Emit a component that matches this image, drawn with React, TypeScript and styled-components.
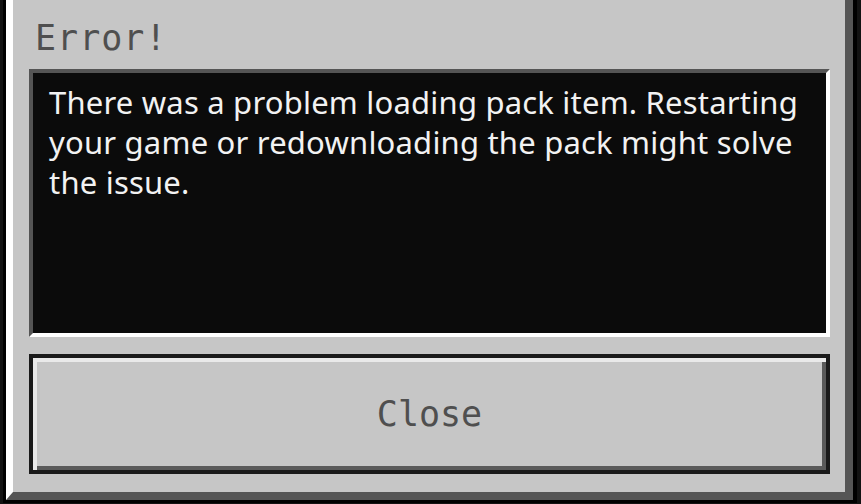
import React from "react";
import styled, { createGlobalStyle } from "styled-components";

const Global = createGlobalStyle`
  html, body { margin: 0; padding: 0; background: #121212; }
  * { box-sizing: border-box; }
`;

const Page = styled.div`
  width: 861px;
  height: 504px;
  overflow: hidden;
  background: #121212;
  padding-left: 3px;
  display: flex;
  align-items: flex-start;
`;

const Panel = styled.div`
  width: 854px;
  height: 503px;
  border-left: 3px solid #000;
  border-right: 4px solid #000;
  border-bottom: 3px solid #000;
`;

const PanelInner = styled.div`
  height: 100%;
  background: #c6c6c6;
  border-left: 7px solid #ffffff;
  border-right: 8px solid #555555;
  border-bottom: 8px solid #555555;
  padding: 0 15px 18px 16px;
  display: flex;
  flex-direction: column;
`;

const Title = styled.div`
  height: 69px;
  padding: 21px 0 0 6px;
  font-family: "DejaVu Sans Mono", "Liberation Mono", monospace;
  font-size: 35px;
  line-height: 35px;
  letter-spacing: 1px;
  color: #4f4f4f;
`;

const MessageBox = styled.div`
  height: 268px;
  background: #0b0b0b;
  border-top: 4px solid #555555;
  border-left: 4px solid #555555;
  border-right: 4px solid #ffffff;
  border-bottom: 4px solid #ffffff;
  padding: 9px 16px;
  font-family: "Noto Sans", "Open Sans", sans-serif;
  font-size: 31px;
  line-height: 40px;
  letter-spacing: 0.2px;
  color: #f2f2f2;
`;

const CloseButton = styled.button`
  margin-top: 17px;
  height: 120px;
  width: 100%;
  background: #c6c6c6;
  border: 4px solid #1a1a1a;
  box-shadow: inset 4px 4px 0 #e9e9e9, inset -4px -4px 0 #5a5a5a;
  display: flex;
  align-items: center;
  justify-content: center;
  font-family: "DejaVu Sans Mono", "Liberation Mono", monospace;
  font-size: 35px;
  line-height: 35px;
  color: #4f4f4f;
  padding: 0;
  cursor: pointer;
`;

export default function App() {
  return (
    <>
      <Global />
      <Page>
        <Panel>
          <PanelInner>
            <Title>Error!</Title>
            <MessageBox>
              There was a problem loading pack item. Restarting your game or
              redownloading the pack might solve the issue.
            </MessageBox>
            <CloseButton>Close</CloseButton>
          </PanelInner>
        </Panel>
      </Page>
    </>
  );
}
